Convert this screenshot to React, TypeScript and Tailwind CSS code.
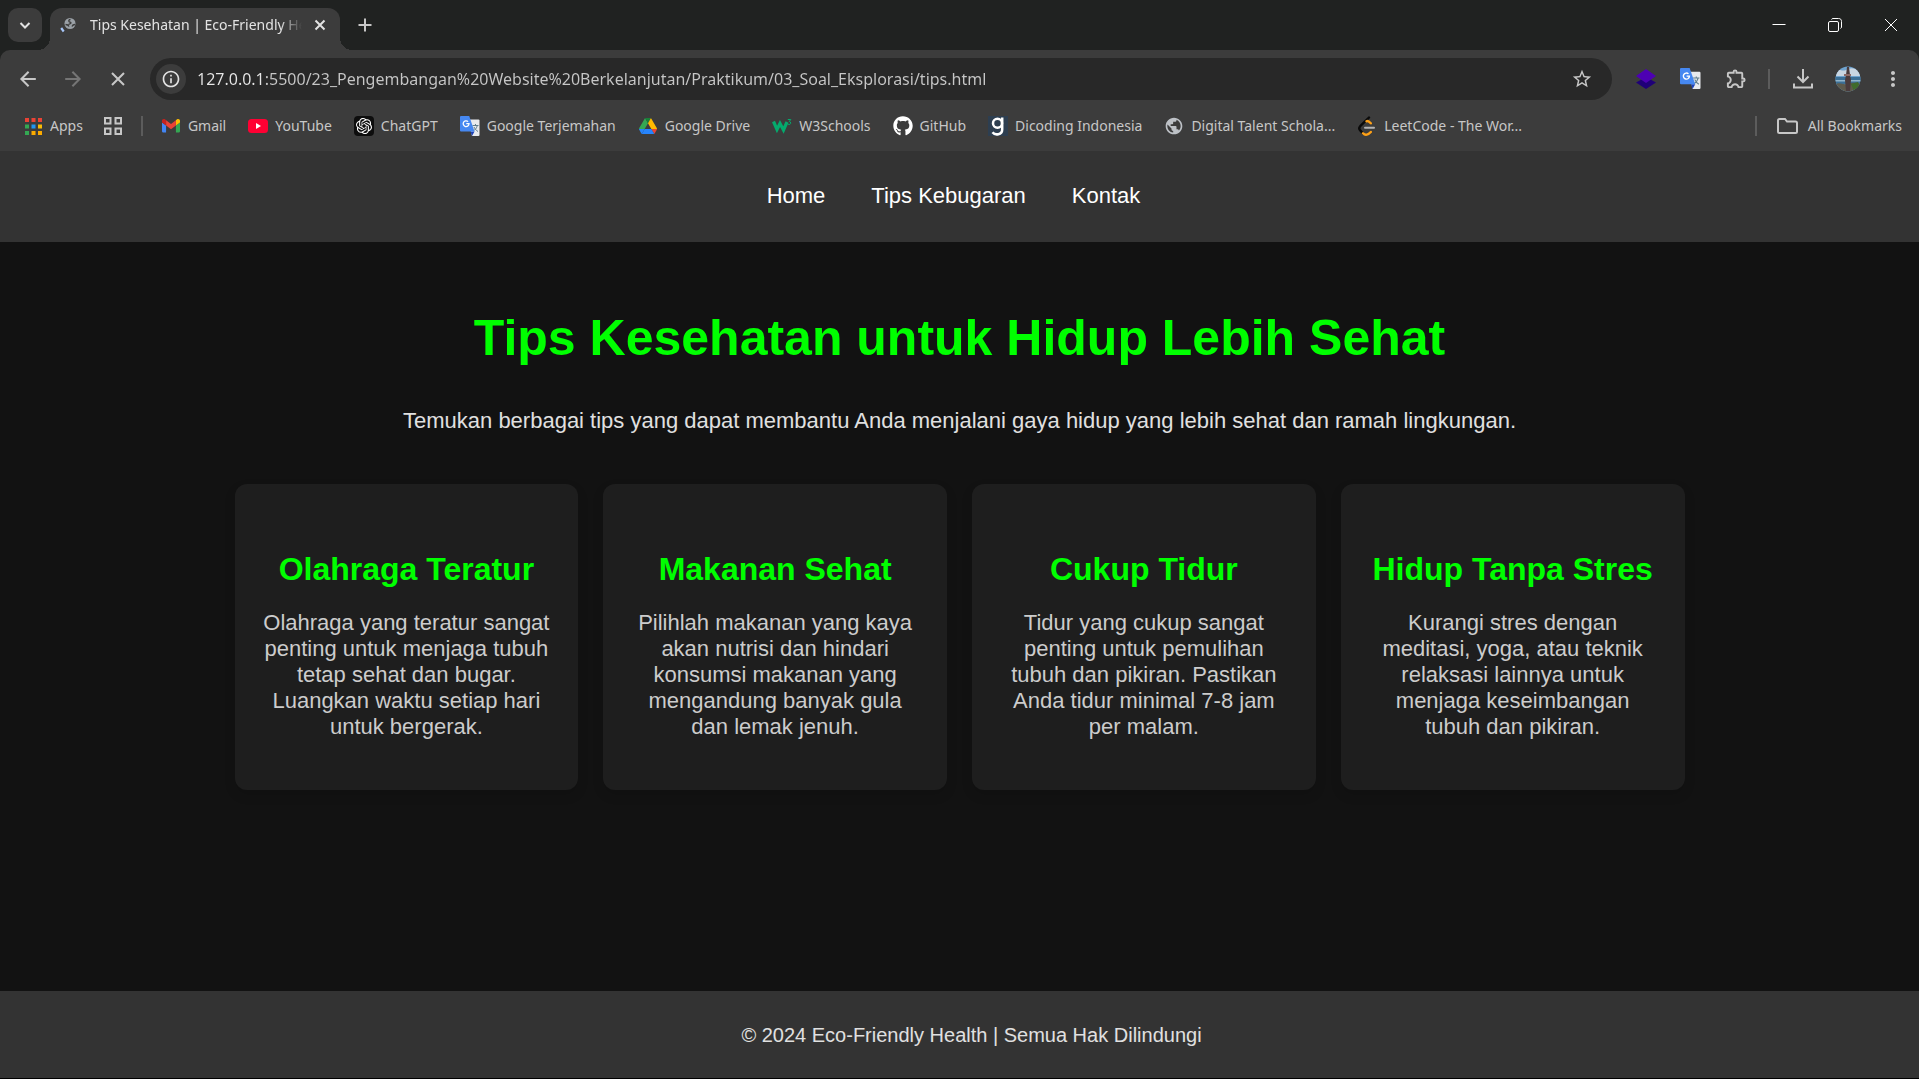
import type { ReactNode } from "react";
import { FaGithub } from "react-icons/fa";
import { SiOpenai } from "react-icons/si";
import {
  MdPublic,
  MdStarBorder,
  MdOutlineExtension,
  MdOutlineInfo,
  MdMoreVert,
} from "react-icons/md";

function GmailIcon() {
  return (
    <svg viewBox="52 42 88 66" className="w-[18px]" aria-hidden="true">
      <path fill="#4285f4" d="M58 108h14V74L52 59v43c0 3.32 2.69 6 6 6" />
      <path fill="#34a853" d="M120 108h14c3.32 0 6-2.69 6-6V59l-20 15" />
      <path fill="#fbbc04" d="M120 48v26l20-15v-8c0-7.42-8.47-11.65-14.4-7.2" />
      <path fill="#ea4335" d="M72 74V48l24 18 24-18v26L96 92" />
      <path fill="#c5221f" d="M52 51v8l20 15V48l-5.6-4.2c-5.94-4.45-14.4-.22-14.4 7.2" />
    </svg>
  );
}

function YouTubeIcon() {
  return (
    <svg viewBox="0 0 20 14" className="w-5" aria-hidden="true">
      <rect width="20" height="14" rx="3.5" fill="#ff0033" />
      <path d="M8 4v6l5-3z" fill="#fff" />
    </svg>
  );
}

function ChatGptIcon() {
  return (
    <span className="flex size-5 items-center justify-center rounded bg-[#0d0d0d] text-white">
      <SiOpenai className="size-4" />
    </span>
  );
}

function TranslateIcon({ className = "size-5" }: { className?: string }) {
  return (
    <svg viewBox="0 0 20 20" className={className} aria-hidden="true">
      <path d="M8 3.5h10.5a1 1 0 0 1 1 1V19a1 1 0 0 1-1 1H12z" fill="#e8eaed" />
      <path
        d="M12.5 9.5h6M15.5 8v1.5M17.3 9.5c-.5 2.5-2.3 4.5-4 5.5M14 11c.8 1.8 2.3 3.5 4 4.5"
        stroke="#5f7d8c"
        fill="none"
      />
      <path d="M10.5 15.5h4L12 20z" fill="#1a3fb5" />
      <path d="M1 0h8.2l5.3 15.5H1a1 1 0 0 1-1-1V1a1 1 0 0 1 1-1z" fill="#4688f1" />
      <path
        d="M6.3 7.7h2.7a2.900 2.900 0 1 1-.9-2.100"
        stroke="#fff"
        strokeWidth="1.3"
        fill="none"
      />
    </svg>
  );
}

function DriveIcon() {
  return (
    <svg viewBox="0 0 87.3 78" className="w-[18px]" aria-hidden="true">
      <path fill="#2684fc" d="m6.6 66.85 3.85 6.65c.8 1.400 1.950 2.500 3.300 3.300l13.750-23.800h-27.500c0 1.550.4 3.100 1.200 4.500z" />
      <path fill="#34a853" d="m43.65 25-13.75-23.8c-1.350.8-2.500 1.900-3.300 3.300l-25.400 44a9.060 9.060 0 0 0-1.200 4.500h27.500z" />
      <path fill="#ea4335" d="m73.55 76.8c1.350-.8 2.500-1.900 3.300-3.300l1.600-2.750 7.650-13.250c.8-1.400 1.200-2.950 1.200-4.500h-27.502l5.852 11.500z" />
      <path fill="#188038" d="m43.65 25 13.75-23.8c-1.350-.8-2.900-1.200-4.500-1.200h-18.500c-1.600 0-3.150.45-4.500 1.200z" />
      <path fill="#2684fc" d="m59.8 53h-32.3l-13.75 23.8c1.350.8 2.900 1.200 4.500 1.200h50.800c1.600 0 3.150-.45 4.500-1.200z" />
      <path fill="#ffba00" d="m73.4 26.5-12.7-22c-.8-1.400-1.950-2.500-3.300-3.300l-13.750 23.800 16.150 28h27.450c0-1.550-.4-3.100-1.200-4.500z" />
    </svg>
  );
}

function W3Icon() {
  return (
    <svg viewBox="0 0 20 20" className="size-5" fill="none" stroke="#04aa6d" aria-hidden="true">
      <path d="M1.5 5.5 5 13.5 8 7.5l3.5 6.5L15 6" strokeWidth="3.2" />
      <path d="M15.8 3.5h3L17.3 5.5c1.800 0 2 3-.2 3-.8 0-1.300-.4-1.500-1" strokeWidth="1" />
    </svg>
  );
}

function DicodingIcon() {
  return (
    <svg viewBox="0 0 20 20" className="size-5" aria-hidden="true">
      <rect width="20" height="20" fill="#2d3e50" />
      <g fill="none" stroke="#fff" strokeWidth="2.5">
        <circle cx="9.5" cy="7.2" r="4.5" />
        <path d="M14.2 1.5v12c0 5.300-7 6.300-9.700 2.700" />
      </g>
    </svg>
  );
}

function LeetCodeIcon() {
  return (
    <svg viewBox="0 0 20 20" className="size-5" fill="none" strokeWidth="2.4" strokeLinecap="round" aria-hidden="true">
      <path d="M12 1.5 3.2 10.2c-1.300 1.400-1.300 2.800 0 4.200l2.600 2.800" stroke="#0a0a0a" />
      <path d="M9.5 5.3c1.500-.8 2.700.2 4.300 2M6 17.3c2.400 2.600 5.200 1.500 7.800-1.300" stroke="#ffa116" />
      <path d="M8 11.800h9" stroke="#b3b3b3" strokeWidth="2" />
    </svg>
  );
}

function AppsIcon() {
  const colours = [
    "#ea4335", "#ea4335", "#ea4335",
    "#34a853", "#2196f3", "#fbbc04",
    "#34a853", "#fbab00", "#fbab00",
  ];
  return (
    <svg viewBox="0 0 17 17" className="w-[17px]" aria-hidden="true">
      {colours.map((c, i) => (
        <rect key={i} x={(i % 3) * 6.5} y={Math.floor(i / 3) * 6.5} width="4" height="4" fill={c} />
      ))}
    </svg>
  );
}

function TabGroupsIcon() {
  return (
    <svg viewBox="0 0 18 18" className="w-[18px]" fill="none" stroke="#c7c7c7" strokeWidth="2" aria-hidden="true">
      <rect x="1" y="1" width="5.5" height="5.5" />
      <rect x="11.5" y="1" width="5.5" height="5.5" />
      <rect x="1" y="11.5" width="5.5" height="5.5" />
      <rect x="11.5" y="11.5" width="5.5" height="5.5" />
    </svg>
  );
}

function Line({ d, className, width = 2 }: { d: string; className: string; width?: number }) {
  return (
    <svg viewBox="0 0 20 20" className={className} fill="none" stroke="currentColor" strokeWidth={width} aria-hidden="true">
      <path d={d} />
    </svg>
  );
}

function Avatar() {
  return (
    <svg viewBox="0 0 26 26" className="size-[26px]" aria-hidden="true">
      <clipPath id="avatar">
        <circle cx="13" cy="13" r="12.5" />
      </clipPath>
      <g clipPath="url(#avatar)">
        <rect width="26" height="26" fill="#6fa3cf" />
        <path d="M0 5c4-3 7 1 11-1s6-3 15 1v5H0z" fill="#c9d6e2" />
        <rect y="11" width="26" height="7" fill="#3b6f96" />
        <path d="M0 14h26v1.500H0z" fill="#8fb3c9" />
        <path d="M0 18c6-2 8 1 12 0s10-2 14 0v8H0z" fill="#5d5a4c" />
        <path d="M16 18l7-2 2 6-6 3z" fill="#3f6b2c" />
        <path d="M12 1h2l1 8 1 5-1 11h-4l-1-11 1-5z" fill="#4a3b3c" />
        <path d="M9 8h7v2H9z" fill="#8c6a66" />
      </g>
    </svg>
  );
}

const bookmarks: { label: string; icon: ReactNode }[] = [
  { label: "Gmail", icon: <GmailIcon /> },
  { label: "YouTube", icon: <YouTubeIcon /> },
  { label: "ChatGPT", icon: <ChatGptIcon /> },
  { label: "Google Terjemahan", icon: <TranslateIcon /> },
  { label: "Google Drive", icon: <DriveIcon /> },
  { label: "W3Schools", icon: <W3Icon /> },
  { label: "GitHub", icon: <FaGithub className="size-5 text-white" /> },
  { label: "Dicoding Indonesia", icon: <DicodingIcon /> },
  { label: "Digital Talent Schola...", icon: <MdPublic className="size-5 text-[#bdc1c6]" /> },
  { label: "LeetCode - The Wor...", icon: <LeetCodeIcon /> },
];

const cards = [
  {
    title: "Olahraga Teratur",
    text: "Olahraga yang teratur sangat penting untuk menjaga tubuh tetap sehat dan bugar. Luangkan waktu setiap hari untuk bergerak.",
  },
  {
    title: "Makanan Sehat",
    text: "Pilihlah makanan yang kaya akan nutrisi dan hindari konsumsi makanan yang mengandung banyak gula dan lemak jenuh.",
  },
  {
    title: "Cukup Tidur",
    text: "Tidur yang cukup sangat penting untuk pemulihan tubuh dan pikiran. Pastikan Anda tidur minimal 7-8 jam per malam.",
  },
  {
    title: "Hidup Tanpa Stres",
    text: "Kurangi stres dengan meditasi, yoga, atau teknik relaksasi lainnya untuk menjaga keseimbangan tubuh dan pikiran.",
  },
];

function TabStrip() {
  return (
    <div className="flex h-[50px] items-end bg-[#202221] pl-2">
      <button aria-label="Search tabs" className="mb-2 flex size-[34px] items-center justify-center self-end rounded-[10px] bg-[#3c3c3c] text-[#e3e3e3]">
        <Line d="M5.5 8 10 12.5 14.5 8" className="size-5" />
      </button>
      <div className="relative ml-2 flex h-[42px] w-[290px] items-center rounded-t-xl bg-[#3c3c3c] pr-[10px] pb-2 pl-[10px]">
        <span className="absolute bottom-0 -left-3 size-3 bg-[radial-gradient(circle_at_top_left,transparent_12px,#3c3c3c_12px)]" />
        <span className="absolute -right-3 bottom-0 size-3 bg-[radial-gradient(circle_at_top_right,transparent_12px,#3c3c3c_12px)]" />
        <svg viewBox="0 0 16 16" className="size-4" aria-hidden="true">
          <circle cx="10" cy="6.5" r="5.5" fill="#9aa0a6" />
          <path
            d="M10.5 2.500c-1.500 0-2 1-1.500 2s2 .5 2 1.500-2 .5-2.500 1.500M5.500 7.500c2 0 3 .5 3.500 2M12 9.500c.5-1.500 1.500-2 3-2"
            fill="none"
            stroke="#3c3c3c"
            strokeWidth="1.3"
          />
          <path d="M1.2 11 3.7 14.5" stroke="#a8c7fa" strokeWidth="2.2" />
        </svg>
        <span className="ml-[14px] min-w-0 flex-1 overflow-hidden text-[14px] leading-5 whitespace-nowrap text-[#e3e3e3] [mask-image:linear-gradient(to_right,black_190px,transparent_212px)]">
          Tips Kesehatan | Eco-Friendly Health
        </span>
        <button aria-label="Close tab" className="ml-1 text-[#e3e3e3]">
          <Line d="M5.5 5.5 14.5 14.5M14.5 5.5 5.5 14.5" className="size-5" />
        </button>
      </div>
      <button aria-label="New tab" className="mb-[15px] ml-[15px] text-[#c7c7c7]">
        <Line d="M10 3.5V16.5M3.5 10H16.5" className="size-5" />
      </button>
      <div className="mb-[15px] ml-auto flex items-center gap-9 pr-[18px] text-white">
        <button aria-label="Minimize">
          <Line d="M3.5 9.5H16.5" className="size-5" width={1} />
        </button>
        <button aria-label="Restore">
          <svg viewBox="0 0 20 20" className="size-5" fill="none" stroke="currentColor" aria-hidden="true">
            <rect x="3.5" y="6.5" width="10" height="10" rx="1.5" />
            <path d="M6.5 4.500c.3-.7.9-1 1.500-1h5.500c2 0 3 1 3 3V12c0 .6-.3 1.200-1 1.500" />
          </svg>
        </button>
        <button aria-label="Close window">
          <Line d="M4 4 16 16M16 4 4 16" className="size-5" width={1} />
        </button>
      </div>
    </div>
  );
}

function Toolbar() {
  return (
    <div className="flex h-[57px] items-center rounded-t-[10px] bg-[#3c3c3c] pr-[14px] pl-4 text-[#c7c7c7]">
      <div className="flex items-center gap-[21px]">
        <button aria-label="Back">
          <Line d="M16.5 10H5M10.5 4 4.5 10l6 6" className="size-6" width={1.7} />
        </button>
        <button aria-label="Forward" className="text-[#757575]">
          <Line d="M3.5 10H15M9.5 4l6 6-6 6" className="size-6" width={1.7} />
        </button>
        <button aria-label="Stop loading">
          <Line d="M5 5 15 15M15 5 5 15" className="size-6" width={1.7} />
        </button>
      </div>
      <div className="ml-5 flex h-[42px] flex-1 items-center rounded-full bg-[#282828] pr-[19px] pl-1.5">
        <button aria-label="Site information" className="flex size-[30px] items-center justify-center rounded-full bg-[#3c3c3c]">
          <MdOutlineInfo className="size-5 text-[#e3e3e3]" />
        </button>
        <input
          aria-label="Address"
          readOnly
          defaultValue="127.0.0.1:5500/23_Pengembangan%20Website%20Berkelanjutan/Praktikum/03_Soal_Eksplorasi/tips.html"
          className="ml-[11px] min-w-0 flex-1 bg-[linear-gradient(to_right,#e8e8e8_67px,#c7c7c7_67px)] bg-clip-text text-[16px] leading-6 text-transparent outline-none"
        />
        <button aria-label="Bookmark this page">
          <MdStarBorder className="size-[22px]" />
        </button>
      </div>
      <div className="ml-6 flex items-center">
        <button aria-label="Layers extension">
          <svg viewBox="0 0 20 20" className="size-5" aria-hidden="true">
            <path d="M0 13.5 10 8l10 5.500L10 20z" fill="#1f0078" />
            <path d="M0 7 10 0l10 7-10 7z" fill="#4d00b3" />
          </svg>
        </button>
        <button aria-label="Google Translate" className="ml-6">
          <TranslateIcon className="size-[21px]" />
        </button>
        <button aria-label="Extensions" className="ml-6">
          <MdOutlineExtension className="size-[23px]" />
        </button>
        <span className="ml-5 h-5 w-0.5 bg-[#5c5c5c]" />
        <button aria-label="Downloads" className="ml-[23px]">
          <Line d="M10 0V12.5M4.5 7.5l5.500 5.500 5.500-5.500M1 14.5V18.5H19V14.5" className="size-5" />
        </button>
        <button aria-label="Profile" className="ml-[22px]">
          <Avatar />
        </button>
        <button aria-label="Menu" className="ml-5">
          <MdMoreVert className="size-6" />
        </button>
      </div>
    </div>
  );
}

function BookmarksBar() {
  return (
    <div className="flex h-11 items-center bg-[#3c3c3c] pr-[17px] pb-1.5 pl-[25px] text-[14px] leading-5 whitespace-nowrap text-[#c7c7c7]">
      <a href="#apps" className="flex items-center gap-2">
        <AppsIcon />
        Apps
      </a>
      <button aria-label="Tab groups" className="ml-[21px]">
        <TabGroupsIcon />
      </button>
      <span className="ml-[19px] h-5 w-0.5 bg-[#5c5c5c]" />
      <nav aria-label="Bookmarks" className="ml-[18px] flex items-center gap-[22px]">
        {bookmarks.map((b) => (
          <a key={b.label} href="#bookmark" className="flex items-center gap-[7px]">
            <span className="flex size-5 items-center justify-center">{b.icon}</span>
            {b.label}
          </a>
        ))}
      </nav>
      <span className="ml-auto h-5 w-0.5 bg-[#5c5c5c]" />
      <a href="#all" className="ml-5 flex items-center gap-[10px]">
        <svg viewBox="0 0 21 16" className="w-[21px]" fill="none" stroke="currentColor" strokeWidth="2" aria-hidden="true">
          <path d="M1 2.5A1.500 1.500 0 0 1 2.500 1H8l2 2.500h8.500A1.500 1.500 0 0 1 20 5v8.500a1.500 1.500 0 0 1-1.500 1.500h-16A1.500 1.500 0 0 1 1 13.500z" />
        </svg>
        All Bookmarks
      </a>
    </div>
  );
}

export default function App() {
  return (
    <div className="flex min-h-screen flex-col border-b border-black bg-[#121212] font-['Liberation_Sans',Arial,sans-serif]">
      <header className="bg-[#202221] font-['Noto_Sans','Open_Sans',sans-serif]">
        <TabStrip />
        <Toolbar />
        <BookmarksBar />
      </header>
      <nav aria-label="Main" className="flex h-[91px] items-center justify-center gap-[46px] bg-[#333] pr-3 pb-0.5 text-[22px] leading-7 text-white">
        <a href="#home">Home</a>
        <a href="#tips">Tips Kebugaran</a>
        <a href="#kontak">Kontak</a>
      </nav>
      <main className="mx-auto w-full max-w-[1500px] flex-1 px-[25px] pt-[67px] text-center">
        <h1 className="text-[50px] leading-[58px] font-bold text-[#00ff00]">Tips Kesehatan untuk Hidup Lebih Sehat</h1>
        <p className="mt-[41px] text-[22px] leading-[26px] text-[#e0e0e0]">
          Temukan berbagai tips yang dapat membantu Anda menjalani gaya hidup yang lebih sehat dan ramah lingkungan.
        </p>
        <div className="mt-[50px] grid grid-cols-4 gap-[25px]">
          {cards.map((c) => (
            <article key={c.title} className="rounded-xl bg-[#1e1e1e] px-[25px] pt-[67px] pb-[50px] shadow-[0_5px_12px_rgba(0,0,0,0.12)]">
              <h2 className="text-[32px] leading-9 font-bold text-[#00ff00]">{c.title}</h2>
              <p className="mt-[23px] text-[22px] leading-[26px] text-[#ccc]">{c.text}</p>
            </article>
          ))}
        </div>
      </main>
      <footer className="bg-[#333] pt-[30px] pb-[29px] pl-6 text-center text-[20px] leading-7 text-[#e0e0e0]">
        © 2024 Eco-Friendly Health | Semua Hak Dilindungi
      </footer>
    </div>
  );
}
